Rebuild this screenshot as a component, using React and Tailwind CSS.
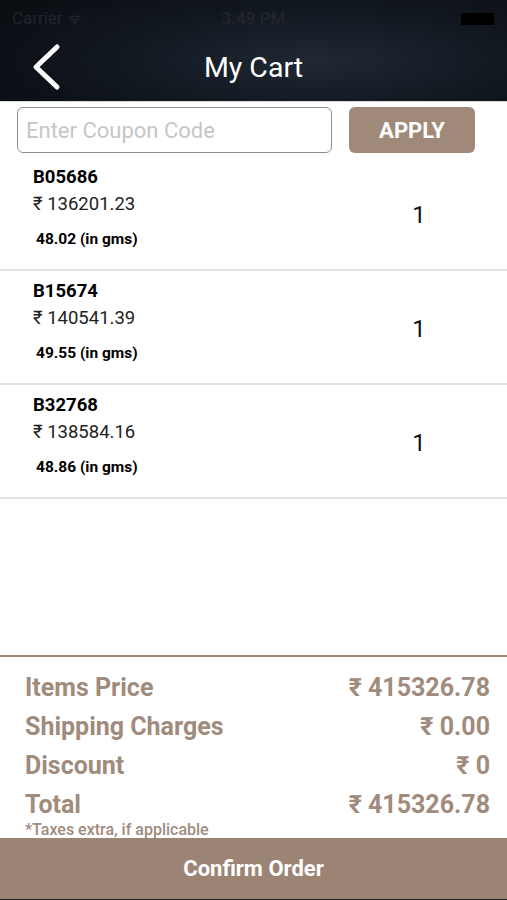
import { useState } from "react";

const ITEMS = [
  { code: "B05686", price: "136201.23", weight: "48.02", qty: 1 },
  { code: "B15674", price: "140541.39", weight: "49.55", qty: 1 },
  { code: "B32768", price: "138584.16", weight: "48.86", qty: 1 },
];

const SUMMARY = [
  { label: "Items Price", value: "₹ 415326.78" },
  { label: "Shipping Charges", value: "₹ 0.00" },
  { label: "Discount", value: "₹ 0" },
  { label: "Total", value: "₹ 415326.78" },
];

function StatusBar() {
  return (
    <div className="flex h-[36px] items-center justify-between px-[12px] pt-[2px] text-[17px] text-[#20242a]">
      <div className="flex w-[120px] items-center gap-[4px]">
        <span>Carrier</span>
        <svg width="16" height="12" viewBox="0 0 16 12" fill="#20242a">
          <path d="M8 12 5.6 9.2a3.4 3.4 0 0 1 4.8 0z" />
          <path d="M3.6 7.2a6.2 6.2 0 0 1 8.8 0l-1.2 1.3a4.5 4.5 0 0 0-6.4 0z" />
          <path d="M1.4 4.9a9.3 9.3 0 0 1 13.2 0l-1.2 1.3a7.6 7.6 0 0 0-10.8 0z" />
        </svg>
      </div>
      <span className="font-semibold">3:49 PM</span>
      <div className="flex w-[120px] justify-end pr-[1px]">
        <div className="h-[12px] w-[33px] bg-black" />
      </div>
    </div>
  );
}

function CartRow({ item }) {
  return (
    <div className="flex border-b-2 border-[#e2e2e2]">
      <div className="flex-1 pl-[33px] pt-[10px] pb-[21px]">
        <div className="text-[18.5px] font-bold leading-[20px] text-black">{item.code}</div>
        <div className="mt-[5px] text-[18.5px] leading-[24px] text-[#222]">₹ {item.price}</div>
        <div className="mt-[14px] pl-[3px] text-[15.5px] font-bold leading-[18px] text-black">
          {item.weight} (in gms)
        </div>
      </div>
      <div className="mr-[58px] flex w-[60px] items-center justify-center pt-[4px] text-[24px] text-[#111]">
        {item.qty}
      </div>
    </div>
  );
}

export default function App() {
  const [coupon, setCoupon] = useState("");

  return (
    <div
      className="flex h-[900px] w-full flex-col bg-white"
      style={{ fontFamily: 'Roboto, "Noto Sans", "DejaVu Sans", sans-serif' }}
    >
      {/* header */}
      <div className="h-[102px] border-b border-[#d8d8d8] bg-[radial-gradient(ellipse_70%_90%_at_62%_60%,#1f2833_0%,#121820_55%,#0b0e13_100%)]">
        <StatusBar />
        <div className="relative flex h-[66px] items-center justify-center">
          <button className="absolute left-[28px] top-[4px] p-[2px]">
            <svg width="32" height="50" viewBox="0 0 32 50" fill="none">
              <polyline
                points="27,5 6,25 27,45"
                stroke="white"
                strokeWidth="5"
                strokeLinecap="round"
                strokeLinejoin="round"
              />
            </svg>
          </button>
          <h1 className="-mt-[2px] text-[28.5px] text-white">My Cart</h1>
        </div>
      </div>

      {/* coupon */}
      <div className="flex gap-[17px] pl-[17px] pt-[5px] pb-[4px]">
        <input
          value={coupon}
          onChange={(e) => setCoupon(e.target.value)}
          placeholder="Enter Coupon Code"
          className="h-[46px] w-[315px] rounded-[6px] border-[1.5px] border-[#8e8e8e] px-[8px] text-[22px] text-[#333] outline-none placeholder:text-[#c6c6c6]"
        />
        <button className="h-[46px] w-[126px] rounded-[6px] bg-[#a08979] text-[22px] font-bold text-white">
          APPLY
        </button>
      </div>

      {/* items */}
      <div>
        {ITEMS.map((item) => (
          <CartRow key={item.code} item={item} />
        ))}
      </div>

      <div className="flex-1" />

      {/* summary */}
      <div className="border-t-2 border-[#a08979] pl-[25px] pr-[17px] pt-[11px]">
        {SUMMARY.map((row) => (
          <div
            key={row.label}
            className="flex justify-between text-[25px] font-bold leading-[39px] text-[#a08b7c]"
          >
            <span>{row.label}</span>
            <span>{row.value}</span>
          </div>
        ))}
        <div className="-mt-[2px] text-[16px] font-medium leading-[16px] text-[#a08b7c]">
          *Taxes extra, if applicable
        </div>
      </div>

      <button className="h-[62px] w-full border-b border-[#222] bg-[#9c8475] text-[22px] font-bold text-white">
        Confirm Order
      </button>
    </div>
  );
}
